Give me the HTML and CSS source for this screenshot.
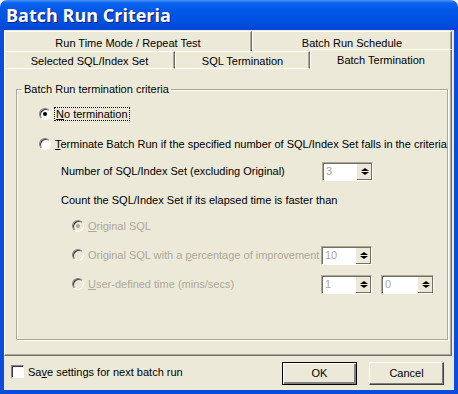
FILE: index.html
```html
<!DOCTYPE html>
<html lang="en">
<head>
    <meta charset="UTF-8">
    <title>Batch Run Criteria</title>
    <link rel="stylesheet" href="styles.css">
</head>
<body>
    <div class="window">
        <div class="titlebar">Batch Run Criteria</div>
        <div class="client">
            <div class="tabs">
                <div class="tab-row row-back">
                    <div class="tab">Run Time Mode / Repeat Test</div>
                    <div class="tab">Batch Run Schedule</div>
                </div>
                <div class="tab-row row-front">
                    <div class="tab">Selected SQL/Index Set</div>
                    <div class="tab">SQL Termination</div>
                    <div class="tab active">Batch Termination</div>
                </div>
            </div>

            <div class="panel">
                <fieldset class="group">
                    <legend>Batch Run termination criteria</legend>

                    <div class="row main first">
                        <span class="radio checked"></span>
                        <span class="focus"><u>N</u>o termination</span>
                    </div>
                    <div class="row main gap-10">
                        <span class="radio"></span>
                        <span class="label"><u>T</u>erminate Batch Run if the specified number of SQL/Index Set falls in the criteria</span>
                    </div>

                    <div class="row sub gap-7">
                        <span class="text-col">Number of SQL/Index Set (excluding Original)</span>
                        <div class="spin"><span class="value">3</span><span class="arrows"><i class="up"></i><i class="down"></i></span></div>
                    </div>
                    <div class="row sub gap-9">
                        <span>Count the SQL/Index Set if its elapsed time is faster than</span>
                    </div>
                    <div class="row opt disabled gap-6">
                        <span class="radio checked"></span>
                        <span class="text-col"><u>O</u>riginal SQL</span>
                    </div>
                    <div class="row opt disabled gap-9">
                        <span class="radio"></span>
                        <span class="text-col">Original SQL with a <u>p</u>ercentage of improvement</span>
                        <div class="spin"><span class="value">10</span><span class="arrows"><i class="up"></i><i class="down"></i></span></div>
                    </div>
                    <div class="row opt disabled gap-9">
                        <span class="radio"></span>
                        <span class="text-col"><u>U</u>ser-defined time (mins/secs)</span>
                        <div class="spin"><span class="value">1</span><span class="arrows"><i class="up"></i><i class="down"></i></span></div>
                        <div class="spin wide"><span class="value">0</span><span class="arrows"><i class="up"></i><i class="down"></i></span></div>
                    </div>
                </fieldset>
            </div>

            <div class="footer">
                <label class="check">
                    <span class="box"></span>
                    <span>Sa<u>v</u>e settings for next batch run</span>
                </label>
                <div class="buttons">
                    <button class="default">OK</button>
                    <button>Cancel</button>
                </div>
            </div>
        </div>
    </div>
</body>
</html>
```

FILE: styles.css
```css
body {
    margin: 0;
    background: #fff;
    font-family: "Liberation Sans", Arial, sans-serif;
    font-size: 11px;
    white-space: nowrap;
    color: #000;
}

.window {
    width: 458px;
    height: 394px;
    box-sizing: border-box;
    padding: 0 4px 4px 4px;
    display: flex;
    flex-direction: column;
    border-radius: 7px 7px 0 0;
    background: linear-gradient(to bottom, #4d93f7 0px, #0b62ee 3px, #0058e8 10px, #0050e0 22px, #0346d6 29px, #0a4cdc 30px, #0a4cdc 100%);
}

.titlebar {
    height: 30px;
    padding-left: 2px;
    display: flex;
    align-items: center;
    color: #fff;
    font-family: "Open Sans", Lato, sans-serif;
    font-weight: bold;
    font-size: 18px;
    text-shadow: 1px 1px 0 #0a1c8a;
}

.client {
    flex: 1;
    display: flex;
    flex-direction: column;
    padding: 1px 2px 0 0;
    background: #ece9d8;
}

/* ---- tabs ---- */
.tab-row {
    display: grid;
}

.row-back {
    height: 20px;
    grid-template-columns: 248px 200px;
}

.row-front {
    height: 18px;
    grid-template-columns: 171px 135px 142px;
}

.tab {
    display: flex;
    align-items: center;
    justify-content: center;
    box-sizing: border-box;
    border-top: 1px solid #fff;
    border-left: 1px solid #fff;
    border-right: 1px solid #716f64;
    box-shadow: inset -1px 0 0 #aca899;
    padding-top: 3px;
}

.row-front .tab {
    border-bottom: 1px solid #fff;
    padding-top: 1px;
}

.row-front .tab.active {
    border-bottom: none;
    margin-top: -2px;
    padding-top: 0;
    background: #ece9d8;
}

/* ---- panel ---- */
.panel {
    height: 287px;
    box-sizing: border-box;
    border-left: 1px solid #fff;
    border-right: 1px solid #716f64;
    border-bottom: 1px solid #716f64;
    box-shadow: inset -1px -1px 0 #aca899;
    padding: 14px 11px 15px 11px;
}

.group {
    margin: 0;
    height: 100%;
    box-sizing: border-box;
    padding: 6px 0 0 0;
    border: 1px solid #aca899;
    box-shadow: 1px 1px 0 #fff, inset 1px 1px 0 #fff;
}

.group legend {
    margin-left: 5px;
    padding: 0 2px;
    line-height: 12px;
}

.row {
    height: 20px;
    display: flex;
    align-items: center;
}

.row.main {
    padding-left: 22px;
}

.row.sub {
    padding-left: 44px;
}

.row.sub .text-col {
    width: 261px;
}

.row.opt {
    padding-left: 55px;
}

.row.opt .text-col {
    width: 233px;
}

.row.first { margin-top: 3px; }
.gap-6 { margin-top: 6px; }
.gap-7 { margin-top: 7px; }
.gap-9 { margin-top: 9px; }
.gap-10 { margin-top: 10px; }

.disabled {
    color: #aca899;
}

.radio {
    width: 12px;
    height: 12px;
    flex: none;
    margin-right: 4px;
    box-sizing: border-box;
    border-radius: 50%;
    border: 1px solid;
    border-color: #808080 #fff #fff #808080;
    box-shadow: inset 1px 1px 0 #404040;
    background: #fff;
    display: flex;
    align-items: center;
    justify-content: center;
}

.radio.checked::after {
    content: "";
    width: 4px;
    height: 4px;
    border-radius: 50%;
    background: #000;
}

.disabled .radio {
    background: #ece9d8;
}

.disabled .radio.checked::after {
    background: #aca899;
}

.focus {
    outline: 1px dotted #000;
    padding: 0 1px;
}

/* ---- spin boxes ---- */
.spin {
    width: 51px;
    height: 19px;
    flex: none;
    box-sizing: border-box;
    display: flex;
    border: 1px solid;
    border-color: #aca899 #fff #fff #aca899;
    box-shadow: inset 1px 1px 0 #716f64;
    background: #fff;
}

.spin.wide {
    width: 53px;
    margin-left: 9px;
}

.spin .value {
    flex: 1;
    padding: 2px 0 0 3px;
    color: #aca899;
}

.spin .arrows {
    width: 15px;
    margin: 1px 0 0 0;
    display: flex;
    flex-direction: column;
    background: #ece9d8;
    border-left: 1px solid #fff;
    box-shadow: inset -1px -1px 0 #716f64;
}

.arrows i {
    flex: 1;
    display: flex;
    justify-content: center;
}

.arrows .up {
    align-items: flex-end;
    padding-bottom: 1px;
}

.arrows .down {
    align-items: flex-start;
}

.arrows .up::after,
.arrows .down::after {
    content: "";
    border-left: 4px solid transparent;
    border-right: 4px solid transparent;
}

.arrows .up::after {
    border-bottom: 3px solid #000;
}

.arrows .down::after {
    border-top: 3px solid #000;
}

/* ---- footer ---- */
.footer {
    flex: 1;
    display: flex;
    align-items: center;
    padding: 0 8px 0 7px;
}

.check {
    display: flex;
    align-items: center;
    gap: 4px;
    margin-top: -3px;
}

.check .box {
    width: 13px;
    height: 13px;
    box-sizing: border-box;
    border: 1px solid;
    border-color: #808080 #fff #fff #808080;
    box-shadow: inset 1px 1px 0 #404040;
    background: #fff;
}

.buttons {
    margin-left: auto;
    display: flex;
    gap: 12px;
}

button {
    width: 75px;
    height: 23px;
    padding: 0;
    font-family: "Liberation Sans", Arial, sans-serif;
    font-size: 11px;
    color: #000;
    background: #ece9d8;
    border: 1px solid;
    border-color: #fff #404040 #404040 #fff;
    box-shadow: inset -1px -1px 0 #808080;
}

button.default {
    border: 1px solid #000;
    box-shadow: inset 1px 1px 0 #fff, inset -2px -2px 0 #808080;
}
```
